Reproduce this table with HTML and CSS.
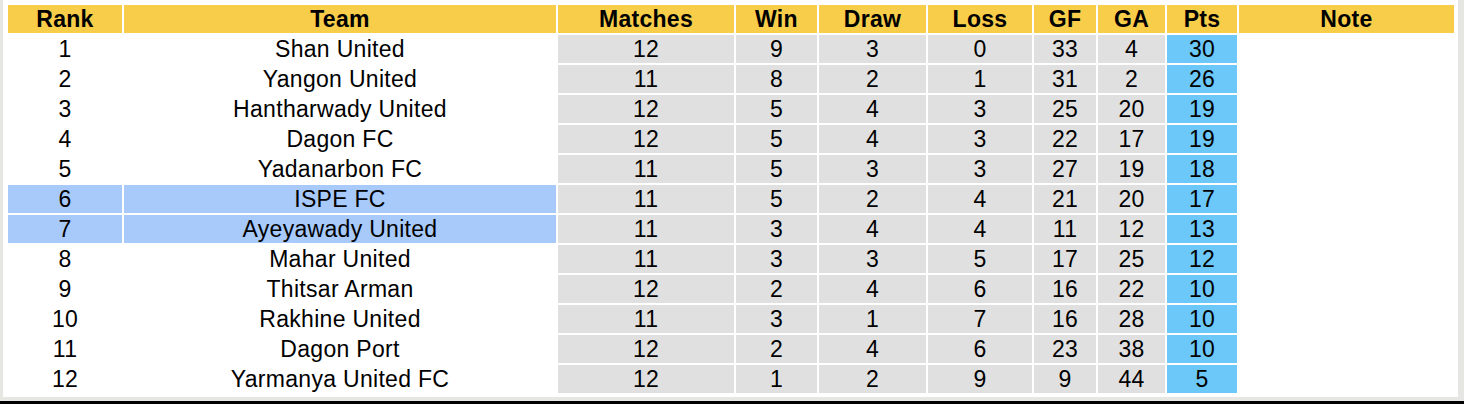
FILE: index.html
```html
<!DOCTYPE html>
<html>
<head>
<meta charset="utf-8">
<link rel="stylesheet" href="styles.css">
</head>
<body>
<div class="frame">
  <div class="sheet">
    <table class="standings">
      <colgroup>
        <col class="c-rank"><col class="c-team"><col class="c-m"><col class="c-w"><col class="c-d"><col class="c-l"><col class="c-gf"><col class="c-ga"><col class="c-pts"><col class="c-note">
      </colgroup>
      <thead>
        <tr><th>Rank</th><th>Team</th><th>Matches</th><th>Win</th><th>Draw</th><th>Loss</th><th>GF</th><th>GA</th><th>Pts</th><th>Note</th></tr>
      </thead>
      <tbody>
        <tr><td>1</td><td>Shan United</td><td class="s">12</td><td class="s">9</td><td class="s">3</td><td class="s">0</td><td class="s">33</td><td class="s">4</td><td class="p">30</td><td></td></tr>
        <tr><td>2</td><td>Yangon United</td><td class="s">11</td><td class="s">8</td><td class="s">2</td><td class="s">1</td><td class="s">31</td><td class="s">2</td><td class="p">26</td><td></td></tr>
        <tr><td>3</td><td>Hantharwady United</td><td class="s">12</td><td class="s">5</td><td class="s">4</td><td class="s">3</td><td class="s">25</td><td class="s">20</td><td class="p">19</td><td></td></tr>
        <tr><td>4</td><td>Dagon FC</td><td class="s">12</td><td class="s">5</td><td class="s">4</td><td class="s">3</td><td class="s">22</td><td class="s">17</td><td class="p">19</td><td></td></tr>
        <tr><td>5</td><td>Yadanarbon FC</td><td class="s">11</td><td class="s">5</td><td class="s">3</td><td class="s">3</td><td class="s">27</td><td class="s">19</td><td class="p">18</td><td></td></tr>
        <tr class="hl"><td>6</td><td>ISPE FC</td><td class="s">11</td><td class="s">5</td><td class="s">2</td><td class="s">4</td><td class="s">21</td><td class="s">20</td><td class="p">17</td><td></td></tr>
        <tr class="hl"><td>7</td><td>Ayeyawady United</td><td class="s">11</td><td class="s">3</td><td class="s">4</td><td class="s">4</td><td class="s">11</td><td class="s">12</td><td class="p">13</td><td></td></tr>
        <tr><td>8</td><td>Mahar United</td><td class="s">11</td><td class="s">3</td><td class="s">3</td><td class="s">5</td><td class="s">17</td><td class="s">25</td><td class="p">12</td><td></td></tr>
        <tr><td>9</td><td>Thitsar Arman</td><td class="s">12</td><td class="s">2</td><td class="s">4</td><td class="s">6</td><td class="s">16</td><td class="s">22</td><td class="p">10</td><td></td></tr>
        <tr><td>10</td><td>Rakhine United</td><td class="s">11</td><td class="s">3</td><td class="s">1</td><td class="s">7</td><td class="s">16</td><td class="s">28</td><td class="p">10</td><td></td></tr>
        <tr><td>11</td><td>Dagon Port</td><td class="s">12</td><td class="s">2</td><td class="s">4</td><td class="s">6</td><td class="s">23</td><td class="s">38</td><td class="p">10</td><td></td></tr>
        <tr><td>12</td><td>Yarmanya United FC</td><td class="s">12</td><td class="s">1</td><td class="s">2</td><td class="s">9</td><td class="s">9</td><td class="s">44</td><td class="p">5</td><td></td></tr>
      </tbody>
    </table>
  </div>
</div>
</body>
</html>
```

FILE: styles.css
```css
html, body {
  margin: 0;
  padding: 0;
  background: #000;
  height: 404px;
  overflow: hidden;
}
.frame {
  background: #e6e6e3;
  height: 401px;
  padding: 0 6px 0 3px;
  box-sizing: border-box;
}
.sheet {
  background: #fff;
  height: 397px;
  padding: 3px 0 0 3px;
  box-sizing: border-box;
}
.standings {
  border-collapse: separate;
  border-spacing: 2px;
  table-layout: fixed;
  width: 1450px;
  font-family: "Liberation Sans", Arial, sans-serif;
  font-size: 23px;
  letter-spacing: 0.3px;
  color: #000;
}
.c-rank { width: 114px; }
.c-team { width: 432px; }
.c-m { width: 176px; }
.c-w { width: 81px; }
.c-d { width: 107px; }
.c-l { width: 104px; }
.c-gf { width: 62px; }
.c-ga { width: 67px; }
.c-pts { width: 70px; }
.c-note { width: 215px; }
.standings th, .standings td {
  height: 28px;
  padding: 0;
  text-align: center;
  vertical-align: middle;
  line-height: 28px;
  white-space: nowrap;
}
.standings th {
  background: #f8cd4a;
  font-weight: bold;
}
.standings td.s { background: #e0e0e0; }
.standings td.p { background: #6cc8f9; }
.standings tr.hl td:nth-child(-n+2) { background: #a7cafb; }
```
